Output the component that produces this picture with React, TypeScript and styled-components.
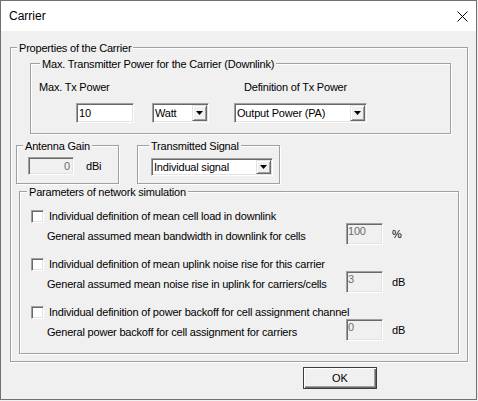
import styled, { createGlobalStyle } from 'styled-components';

const GlobalStyle = createGlobalStyle`
  html, body {
    margin: 0;
    padding: 0;
    background: #f0f0f0;
  }
  * {
    box-sizing: border-box;
  }
`;

const App = () => {
  return (
    <>
      <GlobalStyle />
      <Window>
        <TitleBar>
          <TitleText>Carrier</TitleText>
          <CloseIcon width="11" height="11" viewBox="0 0 11 11">
            <path d="M0.5 0.5 L10.5 10.5 M10.5 0.5 L0.5 10.5" stroke="#000" strokeWidth="1" />
          </CloseIcon>
        </TitleBar>

        <Body>
          <Group $w={458} $h={315}>
            <Caption $left={6}>Properties of the Carrier</Caption>
            <GroupInner>
              <Group $w={421} $h={71} $indent={19}>
                <Caption $left={9}>Max. Transmitter Power for the Carrier (Downlink)</Caption>
                <LabelRow>
                  <PowerLabel>Max. Tx Power</PowerLabel>
                  <span>Definition of Tx Power</span>
                </LabelRow>
                <ControlRow>
                  <Edit $w={58} $h={20}>10</Edit>
                  <Combo $w={57} $h={20}>
                    <ComboText>Watt</ComboText>
                    <DropButton>
                      <ArrowIcon />
                    </DropButton>
                  </Combo>
                  <Combo $w={133} $h={20}>
                    <ComboText>Output Power (PA)</ComboText>
                    <DropButton>
                      <ArrowIcon />
                    </DropButton>
                  </Combo>
                </ControlRow>
              </Group>

              <MiddleRow>
                <Group $w={103} $h={39}>
                  <Caption $left={6}>Antenna Gain</Caption>
                  <BoxContent $left={11} $top={11}>
                    <Edit $w={46} $h={18} $disabled $align="right">0</Edit>
                    <Unit>dBi</Unit>
                  </BoxContent>
                </Group>
                <Group $w={143} $h={39}>
                  <Caption $left={11}>Transmitted Signal</Caption>
                  <BoxContent $left={13} $top={12}>
                    <Combo $w={122} $h={18}>
                      <ComboText>Individual signal</ComboText>
                      <DropButton>
                        <ArrowIcon />
                      </DropButton>
                    </Combo>
                  </BoxContent>
                </Group>
              </MiddleRow>

              <Group $w={440} $h={163} $indent={8} $gapTop={7}>
                <Caption $left={7}>Parameters of network simulation</Caption>
                <SectionList>
                  <Section>
                    <CheckRow>
                      <CheckBox />
                      <span>Individual definition of mean cell load in downlink</span>
                    </CheckRow>
                    <SubRow>
                      <SubLabel>General assumed mean bandwidth in downlink for cells</SubLabel>
                      <Edit $w={37} $h={22} $disabled $align="top">100</Edit>
                      <SubUnit>%</SubUnit>
                    </SubRow>
                  </Section>
                  <Section>
                    <CheckRow>
                      <CheckBox />
                      <span>Individual definition of mean uplink noise rise for this carrier</span>
                    </CheckRow>
                    <SubRow>
                      <SubLabel>General assumed mean noise rise in uplink for carriers/cells</SubLabel>
                      <Edit $w={37} $h={22} $disabled $align="top">3</Edit>
                      <SubUnit>dB</SubUnit>
                    </SubRow>
                  </Section>
                  <Section>
                    <CheckRow>
                      <CheckBox />
                      <span>Individual definition of power backoff for cell assignment channel</span>
                    </CheckRow>
                    <SubRow>
                      <SubLabel>General power backoff for cell assignment for carriers</SubLabel>
                      <Edit $w={37} $h={22} $disabled $align="top">0</Edit>
                      <SubUnit>dB</SubUnit>
                    </SubRow>
                  </Section>
                </SectionList>
              </Group>
            </GroupInner>
          </Group>

          <Footer>
            <OkButton type="button">OK</OkButton>
          </Footer>
        </Body>
      </Window>
    </>
  );
};

const ArrowIcon = () => (
  <svg width="7" height="4" viewBox="0 0 7 4">
    <polygon points="0,0 7,0 3.5,4" fill="#000" />
  </svg>
);

export default App;

const Window = styled.div`
  width: 477px;
  height: 400px;
  border: 1px solid #707070;
  background: #f0f0f0;
  display: flex;
  flex-direction: column;
  font-family: 'Liberation Sans', Arial, sans-serif;
  font-size: 11px;
  letter-spacing: -0.2px;
  line-height: 13px;
  color: #000;
`;

const TitleBar = styled.div`
  height: 30px;
  flex-shrink: 0;
  background: #fff;
  display: flex;
  align-items: center;
  padding: 0 8px;
`;

const TitleText = styled.span`
  flex: 1;
  font-size: 12px;
  letter-spacing: 0;
  line-height: 14px;
`;

const CloseIcon = styled.svg`
  display: block;
`;

const Body = styled.div`
  flex: 1;
  display: flex;
  flex-direction: column;
  padding: 16px 0 0 9px;
`;

const Group = styled.div<{ $w: number; $h: number; $indent?: number; $gapTop?: number }>`
  position: relative;
  flex-shrink: 0;
  width: ${(p) => p.$w}px;
  height: ${(p) => p.$h}px;
  margin-left: ${(p) => p.$indent ?? 0}px;
  margin-top: ${(p) => p.$gapTop ?? 0}px;
  border: 1px solid #a0a0a0;
  box-shadow: inset 1px 1px 0 #fff, 1px 1px 0 #fff;
`;

const Caption = styled.span<{ $left: number }>`
  position: absolute;
  top: -6px;
  left: ${(p) => p.$left}px;
  padding: 0 2px;
  background: #f0f0f0;
  white-space: nowrap;
`;

const GroupInner = styled.div`
  display: flex;
  flex-direction: column;
  padding: 15px 0 0 0;
`;

const LabelRow = styled.div`
  display: flex;
  padding: 17px 0 0 8px;
`;

const PowerLabel = styled.span`
  width: 205px;
`;

const ControlRow = styled.div`
  display: flex;
  margin-top: 9px;
  padding-left: 45px;
  gap: 18px;

  & > :last-child {
    margin-left: 7px;
  }
`;

const MiddleRow = styled.div`
  display: flex;
  gap: 18px;
  margin: 11px 0 0 5px;
`;

const BoxContent = styled.div<{ $left: number; $top: number }>`
  display: flex;
  align-items: center;
  padding: ${(p) => p.$top}px 0 0 ${(p) => p.$left}px;
`;

const Unit = styled.span`
  margin-left: 12px;
`;

const Edit = styled.div<{ $w: number; $h: number; $disabled?: boolean; $align?: 'left' | 'right' | 'top' }>`
  width: ${(p) => p.$w}px;
  height: ${(p) => p.$h}px;
  flex-shrink: 0;
  display: flex;
  align-items: ${(p) => (p.$align === 'top' ? 'flex-start' : 'center')};
  justify-content: ${(p) => (p.$align === 'right' ? 'flex-end' : 'flex-start')};
  padding: ${(p) => (p.$align === 'top' ? '1px 1px' : '0 3px 0 2px')};
  background: ${(p) => (p.$disabled ? '#f0f0f0' : '#fff')};
  color: ${(p) => (p.$disabled ? '#6d6d6d' : '#000')};
  border: 1px solid;
  border-color: #a0a0a0 #fff #fff #a0a0a0;
  box-shadow: inset 1px 1px 0 #696969, inset -1px -1px 0 #e3e3e3;
`;

const Combo = styled.div<{ $w: number; $h: number }>`
  width: ${(p) => p.$w}px;
  height: ${(p) => p.$h}px;
  flex-shrink: 0;
  display: flex;
  align-items: stretch;
  padding: 1px;
  background: #fff;
  border: 1px solid;
  border-color: #a0a0a0 #fff #fff #a0a0a0;
  box-shadow: inset 1px 1px 0 #696969, inset -1px -1px 0 #e3e3e3;
`;

const ComboText = styled.span`
  flex: 1;
  display: flex;
  align-items: center;
  padding-left: 1px;
  white-space: nowrap;
  overflow: hidden;
`;

const DropButton = styled.div`
  width: 15px;
  flex-shrink: 0;
  display: flex;
  align-items: center;
  justify-content: center;
  background: #f0f0f0;
  border: 1px solid;
  border-color: #e3e3e3 #696969 #696969 #e3e3e3;
  box-shadow: inset 1px 1px 0 #fff, inset -1px -1px 0 #a0a0a0;

  svg {
    display: block;
  }
`;

const SectionList = styled.div`
  display: flex;
  flex-direction: column;
  gap: 13px;
  padding: 18px 0 0 11px;
`;

const Section = styled.div`
  display: flex;
  flex-direction: column;
`;

const CheckRow = styled.div`
  display: flex;
  align-items: center;
  gap: 5px;
  height: 13px;
`;

const CheckBox = styled.span`
  width: 13px;
  height: 13px;
  flex-shrink: 0;
  background: #fff;
  border: 1px solid;
  border-color: #a0a0a0 #fff #fff #a0a0a0;
  box-shadow: inset 1px 1px 0 #696969, inset -1px -1px 0 #e3e3e3;
`;

const SubRow = styled.div`
  display: flex;
  align-items: flex-start;
  padding-left: 16px;
`;

const SubLabel = styled.span`
  width: 299px;
  margin-top: 7px;
  white-space: nowrap;
`;

const SubUnit = styled.span`
  margin: 5px 0 0 9px;
`;

const Footer = styled.div`
  display: flex;
  margin-top: 5px;
  padding-left: 293px;
`;

const OkButton = styled.button`
  width: 74px;
  height: 22px;
  padding: 0;
  font-family: 'Liberation Sans', Arial, sans-serif;
  font-size: 11px;
  color: #000;
  background: #f0f0f0;
  border: 1px solid #3c3c3c;
  box-shadow: inset 1px 1px 0 #fff, inset -1px -1px 0 #696969, inset -2px -2px 0 #a0a0a0;
`;
